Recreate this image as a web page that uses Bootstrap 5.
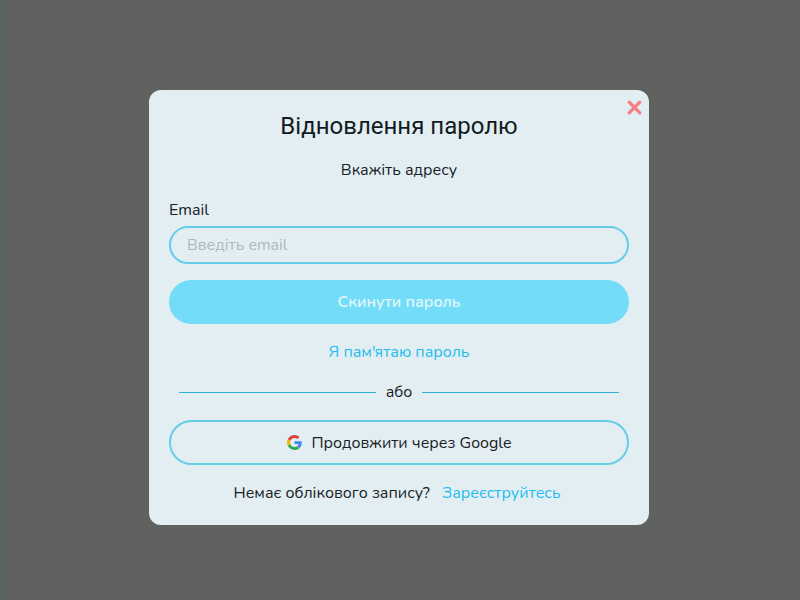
<!DOCTYPE html>
<html lang="uk">
<head>
<meta charset="utf-8">
<meta name="viewport" content="width=device-width, initial-scale=1">
<title>Відновлення паролю</title>
<link href="https://cdn.jsdelivr.net/npm/bootstrap@5.3.0/dist/css/bootstrap.min.css" rel="stylesheet">
<style>
body{height:600px;overflow:hidden;background:linear-gradient(90deg,#5a6262 11px,#60625f 11px);font:400 16px/24px Nunito,"Open Sans","Noto Sans",sans-serif;color:#182126}
.reset-dialog{width:500px;height:435px;margin:90px 0 0 149px;padding:20px;border-radius:12px;background:#e2eef2}
.dialog-title{font:400 24px/32px Roboto,sans-serif;color:#111c22;margin-bottom:16px}
.close-x{top:9px;right:6px;width:17px;height:17px;line-height:0}
.email-field{height:38px;padding:0 16px;border:2px solid #66cce8;border-radius:19px;background:transparent}
.email-field::placeholder{color:#abbbbb;opacity:1}
.pill{height:44px;border-radius:22px;line-height:24px;padding:0}
.pill-main,.pill-main:hover{background:#73dcf8;color:#e0f7fc;font-weight:600}
.pill-google{height:45px;border:2px solid #66cce8;border-radius:23px;color:#182126;gap:9px;padding-left:1px}
.sky{color:#1fbdf0}
.divider{gap:10px;padding:0 10px}
.rule{height:1px;background:#2eb5d5}
.signup{gap:12px;padding-right:4px}
</style>
<script src="https://cdn.jsdelivr.net/npm/bootstrap@5.3.0/dist/js/bootstrap.bundle.min.js"></script>
</head>
<body>
<main class="reset-dialog position-relative">
  <button type="button" class="close-x position-absolute border-0 bg-transparent p-0" aria-label="Закрити">
    <svg width="17" height="17" viewBox="0 0 17 17"><path d="M3.2 3.2L13.8 13.8M13.8 3.2L3.2 13.8" stroke="#f77d80" stroke-width="3.2" stroke-linecap="round"/></svg>
  </button>
  <h1 class="dialog-title text-center">Відновлення паролю</h1>
  <p class="text-center mb-3">Вкажіть адресу</p>
  <label for="email" class="d-block">Email</label>
  <input id="email" type="email" class="form-control email-field mt-1 mb-3" placeholder="Введіть email">
  <button type="button" class="btn pill pill-main w-100">Скинути пароль</button>
  <div class="text-center mt-3"><a href="#" class="sky text-decoration-none">Я пам'ятаю пароль</a></div>
  <div class="divider d-flex align-items-center my-3"><div class="rule flex-fill"></div><span>або</span><div class="rule flex-fill"></div></div>
  <button type="button" class="btn pill pill-google w-100 d-flex align-items-center justify-content-center">
    <svg width="15" height="15" viewBox="0 0 48 48"><path fill="#db4437" d="M24 9.5c3.54 0 6.71 1.22 9.21 3.6l6.85-6.85C35.9 2.38 30.47 0 24 0 14.62 0 6.51 5.38 2.56 13.22l7.98 6.19C12.43 13.72 17.74 9.5 24 9.5z"/><path fill="#4285f4" d="M46.98 24.55c0-1.57-.15-3.09-.38-4.55H24v9.02h12.94c-.58 2.96-2.26 5.48-4.78 7.18l7.73 6c4.51-4.18 7.09-10.36 7.09-17.65z"/><path fill="#f4b400" d="M10.53 28.59c-.48-1.45-.76-2.99-.76-4.59s.27-3.14.76-4.59l-7.98-6.19C.92 16.46 0 20.12 0 24s.92 7.54 2.56 10.78l7.97-6.19z"/><path fill="#34a853" d="M24 48c6.48 0 11.93-2.13 15.89-5.81l-7.73-6c-2.15 1.45-4.92 2.3-8.16 2.3-6.26 0-11.57-4.22-13.47-9.91l-7.98 6.19C6.51 42.62 14.62 48 24 48z"/></svg>
    <span>Продовжити через Google</span>
  </button>
  <div class="signup d-flex justify-content-center mt-3"><span>Немає облікового запису?</span><a href="#" class="sky text-decoration-none">Зареєструйтесь</a></div>
</main>
</body>
</html>
